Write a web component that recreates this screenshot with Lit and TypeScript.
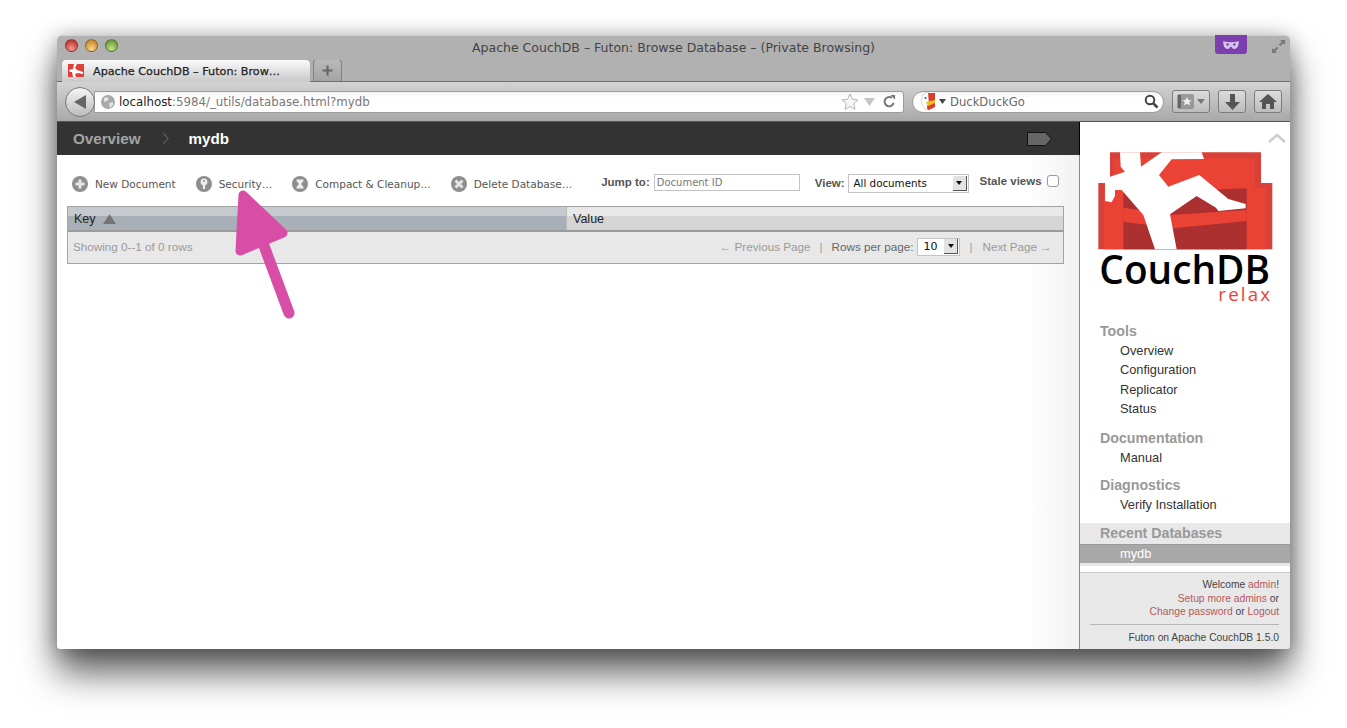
import { LitElement, html, css, svg } from "lit";
import { customElement } from "lit/decorators.js";

const circleIcon = (glyph: unknown) => html`<svg class="ci" viewBox="0 0 16 16" width="16" height="16"><circle cx="8" cy="8" r="8" fill="#8e8e8e"/>${glyph}</svg>`;
const plus = svg`<path d="M8 3.500v9M3.500 8h9" stroke="#e6e6e6" stroke-width="3"/>`;
const key = svg`<circle cx="8" cy="6" r="3.400" fill="#eee"/><rect x="6.900" y="8" width="2.200" height="5" fill="#eee"/><circle cx="8" cy="5" r="1" fill="#8e8e8e"/>`;
const hour = svg`<path d="M4.500 3.500h7v1.600L9 8l2.500 2.900v1.600h-7v-1.600L7 8 4.500 5.100z" fill="#eee"/>`;
const cross = svg`<path d="M4.500 4.500l7 7M11.500 4.500l-7 7" stroke="#e6e6e6" stroke-width="3"/>`;

@customElement("app-root")
export class AppRoot extends LitElement {
  static styles = css`
    :host { display: block; width: 1347px; height: 728px; background: #fff; overflow: hidden; font-family: "Liberation Sans", Arial, sans-serif; }
    * { box-sizing: border-box; }
    .desk { width: 1347px; height: 728px; padding: 35px 57px 79px; }
    .win { position: relative; width: 1233px; height: 614px; display: flex; flex-direction: column; border-radius: 5px 5px 4px 4px; background: #fff;
      box-shadow: 0 24px 36px rgba(0,0,0,.62), 0 2px 20px rgba(0,0,0,.3); }
    .chrome { font-family: "DejaVu Sans", sans-serif; }
    .title { height: 25px; flex: none; position: relative; display: flex; align-items: center; justify-content: center; padding-bottom: 2px; background: #b1b1b1; border-radius: 5px 5px 0 0; border-top: 1px solid #d0d0d0; font-size: 12.500px; color: #444; }
    .lights { position: absolute; left: 8px; top: 3px; display: flex; gap: 7px; }
    .light { width: 13px; height: 13px; border-radius: 50%; border: 1px solid rgba(0,0,0,.35); }
    .r { background: radial-gradient(circle at 50% 80%, #f09a96, #c8403c 70%); }
    .y { background: radial-gradient(circle at 50% 80%, #f6d48c, #cf9030 70%); }
    .g { background: radial-gradient(circle at 50% 80%, #bfe08a, #74a33f 70%); }
    .mask { position: absolute; left: 1158px; top: -1px; width: 32px; height: 19px; background: #7b40ae; border-radius: 0 0 3px 3px; display: flex; align-items: center; justify-content: center; }
    .expand { position: absolute; left: 1214px; top: 3px; }
    .tabs { height: 22px; flex: none; background: #b1b1b1; display: flex; align-items: flex-end; padding-left: 5px; gap: 3px; border-bottom: 1px solid #6e6e6e; }
    .tab { width: 248px; height: 22px; margin-bottom: -1px; background: linear-gradient(#fafafa, #c9c9c9); border-radius: 4px 4px 0 0; display: flex; align-items: center; padding-left: 6px; gap: 9px; font-size: 11.200px; -webkit-text-stroke: .25px #222; color: #222; box-shadow: 0 0 1px #666; white-space: nowrap; }
    .tab2 { width: 29px; height: 22px; background: linear-gradient(#b9b9b9, #a4a4a4); border: 1px solid #808080; border-bottom: none; border-radius: 4px 4px 0 0; display: flex; align-items: center; justify-content: center; }
    .bar { height: 40px; flex: none; display: flex; align-items: center; background: linear-gradient(#d3d3d3, #a9a9a9); border-bottom: 1px solid #555; padding-left: 8px; }
    .back { width: 30px; height: 30px; border-radius: 50%; background: linear-gradient(#f4f4f4, #bdbdbd); border: 1px solid #777; display: flex; align-items: center; justify-content: center; position: relative; z-index: 1; flex: none; }
    .url { width: 810px; height: 22px; margin-left: -1px; background: linear-gradient(#f3f3f3, #fff 30%); border: 1px solid #9c9c9c; border-radius: 0 3px 3px 0; display: flex; align-items: center; padding-left: 6px; font-size: 11.800px; color: #777; flex: none; }
    .url .host { color: #222; margin-left: 4px; }
    .url .end { margin-left: auto; display: flex; align-items: center; gap: 5px; padding-right: 7px; }
    .search { width: 252px; height: 22px; margin-left: 8px; background: linear-gradient(#f3f3f3, #fff 30%); border: 1px solid #9c9c9c; border-radius: 11px; display: flex; align-items: center; padding: 0 4px 0 8px; font-size: 11.600px; color: #666; flex: none; }
    .search .name { margin-left: 4px; flex: 1; }
    .tool { height: 23px; background: linear-gradient(#dcdcdc, #bcbcbc); border: 1px solid #7c7c7c; border-radius: 3px; display: flex; align-items: center; justify-content: center; flex: none; gap: 3px; }
    .t1 { width: 38px; margin-left: 8px; } .t2 { width: 28px; margin-left: 8px; }
    .main { flex: 1; display: flex; min-height: 0; border-radius: 0 0 4px 4px; overflow: hidden; }
    .left { width: 1023px; flex: none; display: flex; flex-direction: column; background: linear-gradient(to right, #fff 970px, #f1f1f1 1022px); border-right: 1px solid #8a8a8a; }
    .dark { height: 33px; flex: none; background: #333; display: flex; align-items: center; padding-left: 16px; font-size: 15.200px; font-weight: 700; position: relative; border-right: 1px solid #000; margin-right: -1px; }
    .ov { color: #a3a3a3; } .db { color: #fff; margin-left: 20px; }
    .chev { margin-left: 21px; display: block; }
    .tag { margin-left: auto; margin-right: 27px; display: block; }
    .actions { display: flex; align-items: center; height: 51px; padding: 5px 0 0 15px; font-family: "DejaVu Sans", sans-serif; font-size: 10.500px; color: #555; white-space: nowrap; }
    .act { display: flex; align-items: center; gap: 7px; margin-right: 20px; padding-top: 1px; }
    .act .ci { flex: none; }
    .jump { margin-left: 9px; display: flex; align-items: center; gap: 4px; font-family: "Liberation Sans", sans-serif; font-weight: 700; font-size: 11.500px; color: #555; margin-top: -2px; }
    input.tx { width: 146px; height: 17px; border: 1px solid #c4c4c4; padding: 0 2px; margin: 0; font-family: "DejaVu Sans", sans-serif; font-size: 10px; color: #555; background: #fff; }
    input.tx::placeholder { color: #777; opacity: 1; }
    .sel { display: flex; align-items: center; justify-content: space-between; height: 19px; border: 1px solid #c4c4c4; background: #fff; font-family: "DejaVu Sans", sans-serif; font-weight: 400; font-size: 10.300px; color: #111; padding: 0 1px 0 5px; }
    .sel .ar { width: 14px; height: 15px; background: #e2e2e2; border-right: 1px solid #555; border-bottom: 1px solid #555; display: flex; align-items: center; justify-content: center; }
    .ar i { display: block; border: 3.500px solid transparent; border-top: 4px solid #111; border-bottom: 0; }
    .view { margin-left: 15px; margin-top: 0; gap: 3px; } .v1 { width: 121px; }
    .stale { margin-left: 11px; gap: 5px; margin-top: -4px; }
    .stale input { appearance: none; width: 12px; height: 12px; margin: 0; border: 1px solid #999; border-radius: 3px; background: #fff; }
    .grid { margin: 0 16px 0 10px; width: 997px; height: 58px; flex: none; border: 1px solid #a3a3a3; background: #e8e8e8; display: flex; flex-direction: column; font-size: 11.700px; }
    .head { height: 25px; flex: none; display: flex; border-bottom: 2px solid #9b9b9b; color: #222; }
    .hk { width: 498px; flex: none; background: linear-gradient(#c6cace 0 9px, #a8afb7 9px); display: flex; align-items: center; gap: 7px; padding: 1px 0 0 6px; font-size: 12.500px; }
    .hv { flex: 1; background: linear-gradient(#e8e8e8 0 9px, #d5d5d5 9px); border-left: 1px solid #bbb; display: flex; align-items: center; padding: 1px 0 0 6px; font-size: 12.500px; }
    .foot { flex: 1; display: flex; align-items: center; padding: 0 11px 2px 5px; color: #9a9a9a; white-space: nowrap; }
    .foot .sp { flex: 1; }
    .foot .lbl { color: #666; }
    .foot .sep { margin: 0 9px; }
    .foot .sep2 { margin: 0 10px 0 9px; }
    .s2 { width: 43px; height: 18px; margin-left: 4px; color: #111; font-size: 11px; }
    .side { width: 210px; flex: none; background: #fff; display: flex; flex-direction: column; position: relative; font-size: 12.800px; color: #333; }
    .logo { display: block; margin: 3px 0 0 0; height: 190px; flex: none; }
    .nav { margin-top: 6.500px; }
    .sec h3 { margin: 0; padding-left: 20px; font-size: 14.200px; line-height: 19px; color: #999; font-weight: 700; }
    .sec a { display: block; padding-left: 40px; line-height: 19.500px; height: 19.500px; color: #333; }
    .s-a { margin-bottom: 10px; }
    .s-b { margin-bottom: 9px; }
    .s-c { margin-bottom: 8px; }
    .recent { background: #e8e8e8; padding-bottom: 3px; }
    .recent h3 { line-height: 21px; }
    .recent a { background: #a8a8a8; color: #fff; height: 19px; line-height: 17px; border-top: 1px solid #9a9a9a; }
    .sfoot { margin-top: auto; height: 77px; background: #e8e8e8; border-top: 1px solid #ccc; padding: 5px 11px 0 10px; text-align: right; font-size: 10.300px; line-height: 13.500px; color: #444; }
    .sfoot b { font-weight: 400; color: #b5595b; }
    .sfoot hr { border: 0; border-top: 1px solid #b5b5b5; margin: 5px 0 6px; }
    .arrow { position: absolute; left: 170px; top: 150px; pointer-events: none; }
  `;

  render() {
    return html`<div class="desk"><div class="win">
      <div class="title chrome">
        <div class="lights"><span class="light r"></span><span class="light y"></span><span class="light g"></span></div>
        Apache CouchDB – Futon: Browse Database – (Private Browsing)
        <div class="mask"><svg width="18" height="10" viewBox="0 0 16 9"><path d="M1 1c3 1 4 1 7 1s4 0 7-1c0 4-1 7-4 7-2 0-2-2-3-2s-1 2-3 2C2 8 1 5 1 1z" fill="#d8c4ea"/><circle cx="5" cy="4" r="1.100" fill="#7b40ae"/><circle cx="11" cy="4" r="1.100" fill="#7b40ae"/></svg></div>
        <svg class="expand" width="15" height="15" viewBox="0 0 15 15"><path d="M9 1h5v5l-1.700-1.700-3 3-1.500-1.500 3-3zM1 9v5h5l-1.700-1.700 3-3-1.500-1.500-3 3z" fill="#777"/></svg>
      </div>
      <div class="tabs chrome">
        <div class="tab"><svg width="16" height="16" viewBox="0 0 16 16"><rect y="1" width="16" height="13" fill="#e0403a"/><path d="M1 7l4-1 1-5h3L7 5l2 2 6 2v2l-5-1-3 1 1 3H5L4 9 2 9z" fill="#fff"/></svg>Apache CouchDB – Futon: Brow…</div>
        <div class="tab2"><svg width="13" height="13" viewBox="0 0 13 13"><path d="M6.500 1.500v10M1.500 6.500h10" stroke="#666" stroke-width="2.200"/></svg></div>
      </div>
      <div class="bar chrome">
        <div class="back"><svg width="12" height="14" viewBox="0 0 12 14"><path d="M12 0v14L0 7z" fill="#666"/></svg></div>
        <div class="url">
          <svg width="14" height="14" viewBox="0 0 14 14"><circle cx="7" cy="7" r="7" fill="#a9a9a9"/><path d="M3 3l3-1 2 2-2 2-3 1zM8 8l4-1 0 3-3 3z" fill="#e4e4e4"/></svg>
          <span class="host">localhost</span>:5984/_utils/database.html?mydb
          <span class="end">
            <svg width="18" height="17" viewBox="0 0 18 17"><path d="M9 1l2.400 5.300 5.600.6-4.200 3.800 1.200 5.700L9 13.500 4 16.400l1.200-5.700L1 6.900l5.600-.6z" fill="#f6f6f6" stroke="#b5b5b5"/></svg>
            <svg width="11" height="8" viewBox="0 0 11 8" style="margin-right:2px"><path d="M0 0h11L5.500 8z" fill="#c4c4c4"/></svg>
            <svg width="13" height="13" viewBox="0 0 14 14" style="margin-left:1px"><path d="M11.500 8.500A5 5 0 1 1 9.500 3" fill="none" stroke="#777" stroke-width="2.200"/><path d="M8 0l5 0v5z" fill="#777"/></svg>
          </span>
        </div>
        <div class="search">
          <svg width="17" height="19" viewBox="0 0 17 19"><ellipse cx="6" cy="9" rx="5.500" ry="8.500" fill="#fff" stroke="#bbb" stroke-width=".6"/><path d="M7 1h7v14l-6 3c-2 0-2-2-2-4l2-2z" fill="#d9402c"/><path d="M5 10l9-2v3l-7 3z" fill="#f0c020"/><circle cx="4.500" cy="6" r="1" fill="#1a55a0"/></svg>
          <svg width="7" height="5" viewBox="0 0 7 5" style="margin-left:1px"><path d="M0 0h7L3.500 5z" fill="#444"/></svg>
          <span class="name">DuckDuckGo</span>
          <svg width="15" height="15" viewBox="0 0 15 15"><circle cx="6" cy="6" r="4.300" fill="none" stroke="#444" stroke-width="2"/><path d="M9.500 9.500l4 4" stroke="#444" stroke-width="2.600"/></svg>
        </div>
        <div class="tool t1"><svg width="17" height="15" viewBox="0 0 17 15"><rect x=".5" y=".5" width="16" height="14" rx="1" fill="#666"/><rect x="4" y="1" width="12" height="13" fill="#999"/><path d="M10 3l1.500 3 3 .3-2.200 2 .7 3.200-3-1.700-3 1.700.7-3.200-2.200-2 3-.3z" fill="#eee"/></svg><svg width="8" height="5" viewBox="0 0 8 5"><path d="M0 0h8L4 5z" fill="#777"/></svg></div>
        <div class="tool t2"><svg width="15" height="16" viewBox="0 0 15 16"><path d="M5 0h5v8h5l-7.500 8L0 8h5z" fill="#555"/></svg></div>
        <div class="tool t2"><svg width="18" height="15" viewBox="0 0 18 15"><path d="M9 0l9 8h-3v7h-4v-5H7v5H3V8H0z" fill="#555"/></svg></div>
      </div>
      <div class="main">
        <div class="left">
          <div class="dark">
            <span class="ov">Overview</span>
            <svg class="chev" width="7" height="13" viewBox="0 0 7 13"><path d="M1 1l5 5.500L1 12" fill="none" stroke="#555" stroke-width="1.500"/></svg>
            <span class="db">mydb</span>
            <svg class="tag" width="25" height="14" viewBox="0 0 25 14"><path d="M.5.500h18l6 6.500-6 6.500H.5z" fill="#666" stroke="#111"/></svg>
          </div>
          <div class="actions">
            <span class="act">${circleIcon(plus)}New Document</span>
            <span class="act">${circleIcon(key)}Security…</span>
            <span class="act">${circleIcon(hour)}Compact &amp; Cleanup…</span>
            <span class="act">${circleIcon(cross)}Delete Database…</span>
            <label class="jump">Jump to: <input class="tx" placeholder="Document ID"></label>
            <label class="jump view">View: <span class="sel v1">All documents<span class="ar"><i></i></span></span></label>
            <label class="jump stale">Stale views <input type="checkbox"></label>
          </div>
          <div class="grid">
            <div class="head">
              <div class="hk">Key <svg width="13" height="10" viewBox="0 0 14 11"><path d="M7 0l7 11H0z" fill="#747474"/></svg></div>
              <div class="hv">Value</div>
            </div>
            <div class="foot">
              <span>Showing 0--1 of 0 rows</span><span class="sp"></span>
              <span>← Previous Page</span><span class="sep">|</span>
              <span class="lbl">Rows per page:</span><span class="sel s2">10<span class="ar"><i></i></span></span>
              <span class="sep sep2">|</span><span>Next Page →</span>
            </div>
          </div>
        </div>
        <div class="side">
          <svg style="position:absolute;left:188px;top:11px" width="18" height="10" viewBox="0 0 18 10"><path d="M1 9l8-7 8 7" fill="none" stroke="#ccc" stroke-width="2.500"/></svg>
          <svg class="logo" width="210" height="190" viewBox="0 0 630 570">
            <path d="M55 174h35V82h453v92h34v199H55z" fill="#d8403a"/>
            <path d="M100 100h425v90h33v183H72V190h28z" fill="#ea4235"/>
            <path d="M130 205l370-15v183H130z" fill="#ad3030"/>
            <path d="M130 248l140 22 230-15v33l-220 22-150-20z" fill="#ea4235"/>
            <path d="M120 82h60l3 43 62-43h120l7 20-97 1-38 47 28 35 93-35 87 72 52 15v13l-82 8-7-10-58-35-80 55 20 105h-65l-35-103-65-75h-20v17l-10 20-20-4v-58l15-15 45-15-13-15z" fill="#fff"/>
            <text x="58" y="478" font-family="Open Sans, Noto Sans, sans-serif" font-size="118" font-weight="600" fill="#000" textLength="512" lengthAdjust="spacingAndGlyphs">CouchDB</text>
            <text x="415" y="527" font-family="Open Sans, Noto Sans, sans-serif" font-size="56" fill="#e8433a" textLength="155" lengthAdjust="spacing">relax</text>
          </svg>
          <div class="nav">
            <div class="sec s-a"><h3>Tools</h3><a>Overview</a><a>Configuration</a><a>Replicator</a><a>Status</a></div>
            <div class="sec s-b"><h3>Documentation</h3><a>Manual</a></div>
            <div class="sec s-c"><h3>Diagnostics</h3><a>Verify Installation</a></div>
            <div class="sec recent"><h3>Recent Databases</h3><a>mydb</a></div>
          </div>
          <div class="sfoot">
            <div>Welcome <b>admin</b>!</div>
            <div><b>Setup more admins</b> or</div>
            <div><b>Change password</b> or <b>Logout</b></div>
            <hr>
            <div>Futon on Apache CouchDB 1.5.0</div>
          </div>
        </div>
      </div>
      <svg class="arrow" width="130" height="175" viewBox="0 0 130 175">
        <path d="M16 10L13 66 56 48z" fill="#d84ea6" stroke="#d84ea6" stroke-width="9" stroke-linejoin="round"/>
        <path d="M33 50L62 128" stroke="#d84ea6" stroke-width="11" stroke-linecap="round"/>
      </svg>
    </div></div>`;
  }
}
